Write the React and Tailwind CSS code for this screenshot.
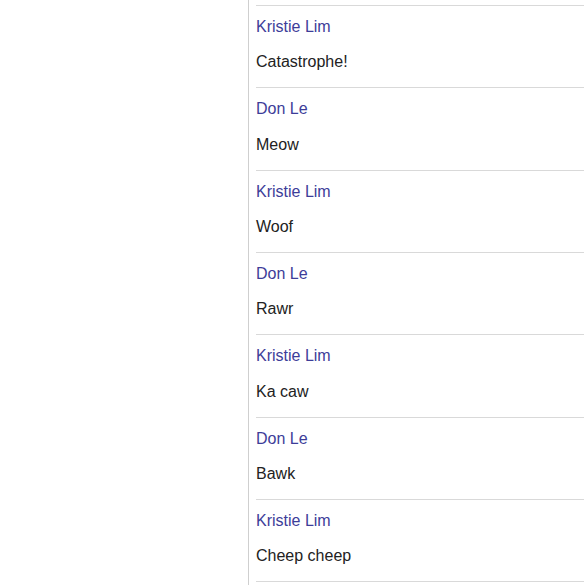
const messages = [
  { name: "Kristie Lim", text: "Catastrophe!" },
  { name: "Don Le", text: "Meow" },
  { name: "Kristie Lim", text: "Woof" },
  { name: "Don Le", text: "Rawr" },
  { name: "Kristie Lim", text: "Ka caw" },
  { name: "Don Le", text: "Bawk" },
  { name: "Kristie Lim", text: "Cheep cheep" },
];

const Message = ({ name, text }) => {
  return (
    <li className="border-t border-[#d9d9d9] pt-[12px] pb-[15.5px]">
      <div className="text-[16px] leading-[18.4px] text-[#3d3d99]">{name}</div>
      <p className="mt-[17px] text-[16px] leading-[18.4px] text-[#222]">{text}</p>
    </li>
  );
};

export default function App() {
  return (
    <div className="flex h-[585px] overflow-hidden bg-white font-['Liberation_Sans',Arial,sans-serif]">
      <aside className="w-[249px] shrink-0 border-r border-[#cfcfcf]" />
      <main className="flex-1 pl-[7px] pt-[5px]">
        <ul>
          {messages.map((m, i) => (
            <Message key={i} name={m.name} text={m.text} />
          ))}
          <li className="border-t border-[#d9d9d9]" />
        </ul>
      </main>
    </div>
  );
}
